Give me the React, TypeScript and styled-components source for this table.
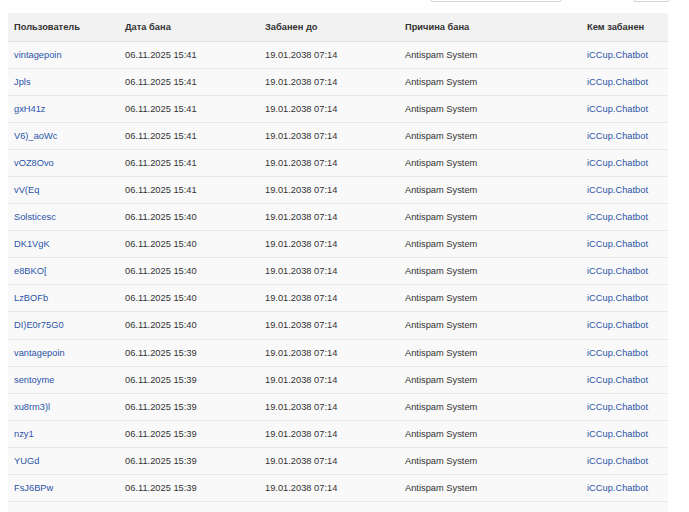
import React from "react";
import styled, { createGlobalStyle } from "styled-components";

const Global = createGlobalStyle`
  html, body { margin: 0; padding: 0; background: #ffffff; }
  body { font-family: "Liberation Sans", Arial, sans-serif; overflow: hidden; }
`;

const Page = styled.div`
  width: 689px;
  height: 512px;
  overflow: hidden;
  padding: 0 21px 0 8px;
  box-sizing: border-box;
`;

const Toolbar = styled.div`
  display: flex;
  justify-content: flex-end;
  align-items: flex-end;
  gap: 71px;
  margin-top: -19px;
  height: 21px;
`;

const SearchInput = styled.div`
  width: 132px;
  height: 21px;
  box-sizing: border-box;
  border: 1px solid #d2d2d2;
  border-radius: 3px;
  background: #fff;
`;

const SmallButton = styled.div`
  width: 37px;
  height: 21px;
  box-sizing: border-box;
  border: 1px solid #d2d2d2;
  border-radius: 3px;
  background: #fff;
  margin-right: -2px;
`;

const Table = styled.table`
  margin-top: 11px;
  width: 660px;
  border-collapse: collapse;
  table-layout: fixed;
  font-size: 9.3px;
  color: #333333;
`;

const HeadRow = styled.tr`
  background: #f2f2f2;
  height: 28px;
`;

const Th = styled.th<{ $w: number }>`
  width: ${(p) => p.$w - 12}px;
  text-align: left;
  font-weight: bold;
  padding: 0 6px;
  border-bottom: 1px solid #e2e2e2;
  color: #333;
`;

const Row = styled.tr`
  background: #f9f9f9;
  height: 27.1px;
  border-top: 1px solid #e6e6e6;
`;

const Td = styled.td`
  padding: 0 6px;
  white-space: nowrap;
  overflow: hidden;
`;

const Link = styled.a`
  color: #2b54a8;
  text-decoration: none;
`;

const cols = [
  { t: "Пользователь", w: 111 },
  { t: "Дата бана", w: 140 },
  { t: "Забанен до", w: 140 },
  { t: "Причина бана", w: 182 },
  { t: "Кем забанен", w: 87 },
];

const rows: [string, string][] = [
  ["vintagepoin", "06.11.2025 15:41"],
  ["Jpls", "06.11.2025 15:41"],
  ["gxH41z", "06.11.2025 15:41"],
  ["V6)_aoWc", "06.11.2025 15:41"],
  ["vOZ8Ovo", "06.11.2025 15:41"],
  ["vV(Eq", "06.11.2025 15:41"],
  ["Solsticesc", "06.11.2025 15:40"],
  ["DK1VgK", "06.11.2025 15:40"],
  ["e8BKO[", "06.11.2025 15:40"],
  ["LzBOFb", "06.11.2025 15:40"],
  ["DI)E0r75G0", "06.11.2025 15:40"],
  ["vantagepoin", "06.11.2025 15:39"],
  ["sentoyme", "06.11.2025 15:39"],
  ["xu8rm3)l", "06.11.2025 15:39"],
  ["nzy1", "06.11.2025 15:39"],
  ["YUGd", "06.11.2025 15:39"],
  ["FsJ6BPw", "06.11.2025 15:39"],
];

export default function App() {
  return (
    <Page>
      <Global />
      <Toolbar>
        <SearchInput />
        <SmallButton />
      </Toolbar>
      <Table>
        <thead>
          <HeadRow>
            {cols.map((c) => (
              <Th key={c.t} $w={c.w}>
                {c.t}
              </Th>
            ))}
          </HeadRow>
        </thead>
        <tbody>
          {rows.map(([user, date]) => (
            <Row key={user}>
              <Td>
                <Link href="#">{user}</Link>
              </Td>
              <Td>{date}</Td>
              <Td>19.01.2038 07:14</Td>
              <Td>Antispam System</Td>
              <Td>
                <Link href="#">iCCup.Chatbot</Link>
              </Td>
            </Row>
          ))}
          <Row>
            <Td>&nbsp;</Td>
            <Td />
            <Td />
            <Td />
            <Td />
          </Row>
        </tbody>
      </Table>
    </Page>
  );
}
